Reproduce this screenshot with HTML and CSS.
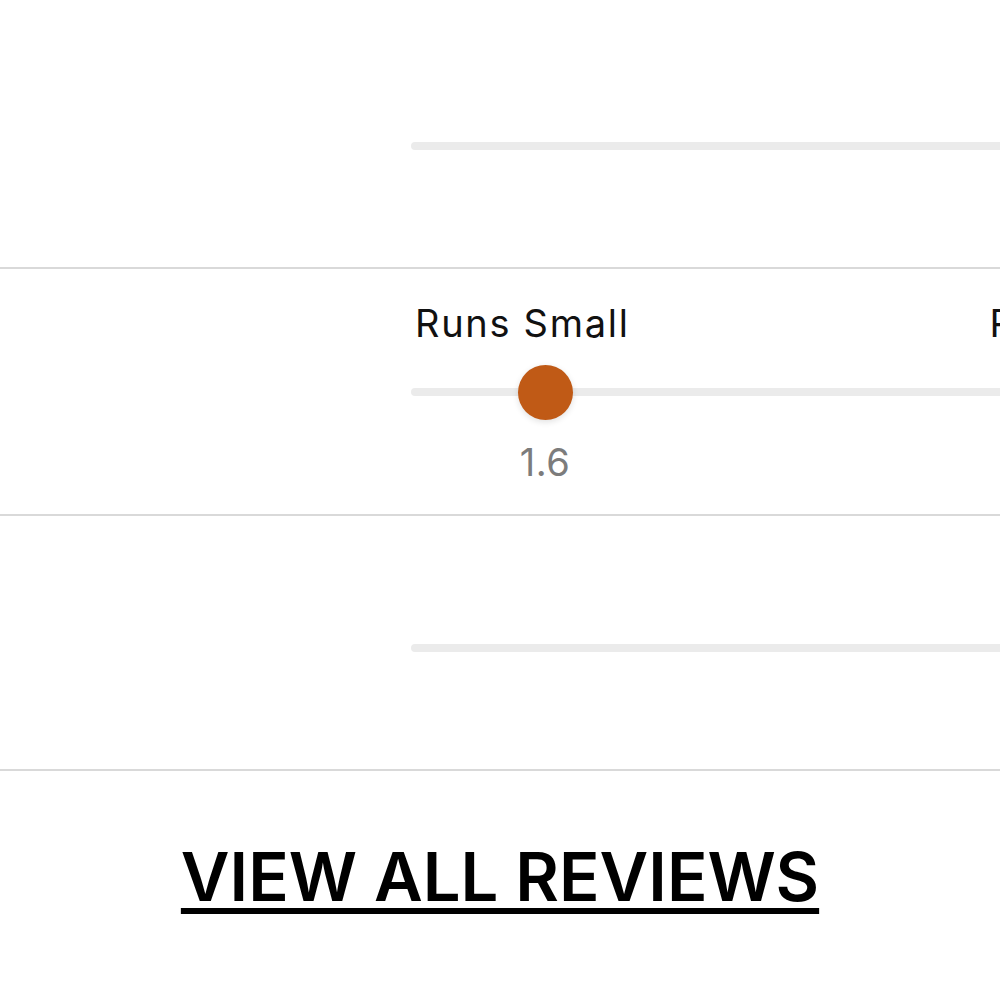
FILE: index.html
```html
<!DOCTYPE html>
<html>
<head>
<meta charset="utf-8">
<link rel="stylesheet" href="styles.css">
</head>
<body>
<div class="page">
  <section class="row row-first">
    <div class="slider">
      <div class="track"></div>
    </div>
  </section>
  <section class="row row-mid">
    <div class="slider">
      <div class="labels">
        <span class="label">Runs Small</span>
        <span class="label label-end">Runs Large</span>
      </div>
      <div class="track track-with-thumb">
        <div class="thumb-wrap" style="left: 134px;">
          <span class="thumb"></span>
          <span class="value">1.6</span>
        </div>
      </div>
    </div>
  </section>
  <section class="row row-last">
    <div class="slider">
      <div class="track"></div>
    </div>
  </section>
  <div class="cta">
    <a class="view-all" href="#">VIEW ALL REVIEWS</a>
  </div>
</div>
</body>
</html>
```
FILE: styles.css
```css
html, body {
  margin: 0;
  padding: 0;
  background: #ffffff;
  overflow: hidden;
}
body {
  font-family: Inter, "Liberation Sans", sans-serif;
  color: #111111;
}
.page {
  width: 1000px;
  height: 1000px;
  overflow: hidden;
}
.row {
  box-sizing: border-box;
  border-bottom: 2px solid #d9d9d9;
  width: 1000px;
  overflow: hidden;
}
.row-first {
  height: 269px;
  padding-top: 142px;
}
.row-mid {
  height: 247px;
  padding-top: 32px;
}
.row-last {
  height: 255px;
  padding-top: 128px;
}
.slider {
  margin-left: 411px;
  width: 900px;
}
.labels {
  display: flex;
  height: 44px;
  line-height: 44px;
}
.label {
  font-size: 38px;
  letter-spacing: 1.7px;
  margin-left: 4px;
  color: #111;
  white-space: nowrap;
}
.label-end {
  margin-left: 360px;
}
.track {
  height: 8px;
  border-radius: 4px;
  background: #ebebeb;
  position: relative;
}
.track-with-thumb {
  margin-top: 43px;
}
.thumb-wrap {
  position: absolute;
  top: 4px;
  width: 0;
}
.thumb {
  position: absolute;
  left: -27.5px;
  top: -27.5px;
  width: 55px;
  height: 55px;
  border-radius: 50%;
  background: #c05a16;
  box-shadow: 0 2px 6px rgba(0, 0, 0, 0.12);
}
.value {
  position: absolute;
  top: 48px;
  left: -60px;
  width: 120px;
  text-align: center;
  font-size: 38px;
  letter-spacing: 0.5px;
  line-height: 44px;
  color: #7c7c7c;
}
.cta {
  display: flex;
  justify-content: center;
  padding-top: 66px;
}
.view-all {
  font-size: 67px;
  font-weight: 600;
  line-height: 80px;
  color: #000;
  text-decoration: underline;
  text-decoration-thickness: 6px;
  text-underline-offset: 7px;
}
```
